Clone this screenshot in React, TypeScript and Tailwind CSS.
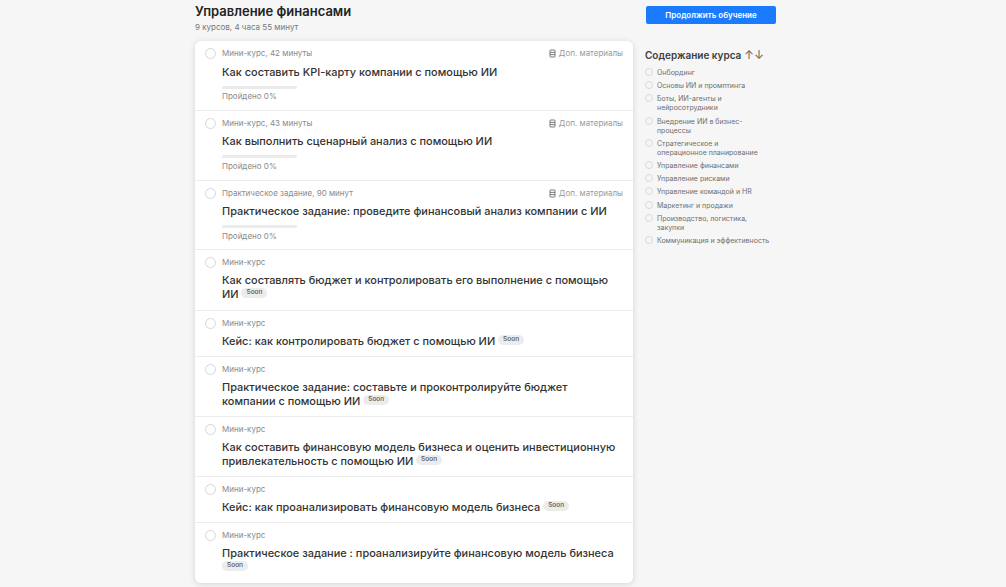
import React from "react";

interface Lesson {
  meta: string;
  title: string;
  progress?: boolean;
  soon?: boolean;
  height: string;
}

const lessons: Lesson[] = [
  { meta: "Мини-курс, 42 минуты", title: "Как составить KPI-карту компании с помощью ИИ", progress: true, height: "h-[70px]" },
  { meta: "Мини-курс, 43 минуты", title: "Как выполнить сценарный анализ с помощью ИИ", progress: true, height: "h-[70px]" },
  { meta: "Практическое задание, 90 минут", title: "Практическое задание: проведите финансовый анализ компании с ИИ", progress: true, height: "h-[69px]" },
  { meta: "Мини-курс", title: "Как составлять бюджет и контролировать его выполнение с помощью ИИ", soon: true, height: "h-[61px]" },
  { meta: "Мини-курс", title: "Кейс: как контролировать бюджет с помощью ИИ", soon: true, height: "h-[46px]" },
  { meta: "Мини-курс", title: "Практическое задание: составьте и проконтролируйте бюджет компании с помощью ИИ", soon: true, height: "h-[60px]" },
  { meta: "Мини-курс", title: "Как составить финансовую модель бизнеса и оценить инвестиционную привлекательность с помощью ИИ", soon: true, height: "h-[60px]" },
  { meta: "Мини-курс", title: "Кейс: как проанализировать финансовую модель бизнеса", soon: true, height: "h-[46px]" },
  { meta: "Мини-курс", title: "Практическое задание : проанализируйте финансовую модель бизнеса", soon: true, height: "h-[60px]" },
];

const contents = [
  "Онбординг",
  "Основы ИИ и промптинга",
  "Боты, ИИ-агенты и нейросотрудники",
  "Внедрение ИИ в бизнес-процессы",
  "Стратегическое и\nоперационное планирование",
  "Управление финансами",
  "Управление рисками",
  "Управление командой и HR",
  "Маркетинг и продажи",
  "Производство, логистика, закупки",
  "Коммуникация и эффективность",
];

const BookIcon = () => (
  <svg width="7" height="9" viewBox="0 0 7 9" fill="none" stroke="#6b6b6b" strokeWidth="0.9">
    <rect x="1" y="1" width="5" height="7" rx="0.5" />
    <path d="M1 3.4h5M1 5.6h5" />
  </svg>
);

const LessonRow = ({ lesson, first }: { lesson: Lesson; first: boolean }) => (
  <div className={`flex border-b border-[#ececec] last:border-b-0 px-[10px] pt-[7px] ${lesson.height}`}>
    <div className="w-[11px] h-[11px] rounded-full border border-[#d4d6de] bg-white shrink-0" />
    <div className="ml-[6px] flex-1 min-w-0">
      <div className="flex items-center justify-between h-[11px] text-[8px] leading-[11px] text-[#8a8a8a]">
        <span>{lesson.meta}</span>
        {lesson.progress && (
          <span className="flex items-center gap-[3px]">
            <BookIcon />
            <span className="text-[#9a9a9a]">Доп. материалы</span>
          </span>
        )}
      </div>
      <div className={`${first ? "mt-[6px]" : "mt-[5px]"} text-[10.95px] leading-[14px] font-medium text-[#333]`}>
        {lesson.title}{" "}
        {lesson.soon && (
          <span className="inline-block align-[4px] px-[5px] h-[10px] rounded-full bg-[#ececec] text-[6.5px] leading-[8px] font-medium text-[#555]">
            Soon
          </span>
        )}
      </div>
      {lesson.progress && (
        <>
          <div className="mt-[7px] w-[75px] h-[3px] rounded-full bg-[#ebebeb]" />
          <div className={`${first ? "mt-[2px]" : "mt-[3px]"} text-[8px] leading-[11px] text-[#8a8a8a]`}>Пройдено 0%</div>
        </>
      )}
    </div>
  </div>
);

export default function App() {
  return (
    <div className="h-[587px] overflow-hidden bg-[#f6f6f6] font-['Inter',sans-serif]">
      <div className="flex w-[581px] ml-[195px]">
        <div className="w-[438px] shrink-0">
          <h1 className="mt-[3px] text-[13px] leading-[17px] font-semibold text-[#222]">Управление финансами</h1>
          <p className="mt-[2px] text-[8px] leading-[11px] text-[#777]">9 курсов, 4 часа 55 минут</p>
          <div className="mt-[8px] rounded-[6px] bg-white shadow-[0_1px_6px_rgba(0,0,0,0.14)]">
            {lessons.map((lesson, i) => (
              <LessonRow key={lesson.title} lesson={lesson} first={i === 0} />
            ))}
          </div>
        </div>
        <aside className="ml-[12px] w-[131px] shrink-0">
          <button className="mt-[3px] ml-[1px] w-[130px] h-[18px] rounded-[2px] bg-[#1a7bff] text-[8px] font-semibold text-white">
            Продолжить обучение
          </button>
          <h2 className="mt-[24px] text-[10px] leading-[14px] font-semibold text-[#3d3d3d]">
            Содержание курса <span className="text-[12px] font-normal text-[#666]">↑↓</span>
          </h2>
          <ul className="mt-[6px]">
            {contents.map((item) => (
              <li key={item} className="flex items-start gap-[4px] mb-[4.2px]">
                <span className="w-[8px] h-[8px] rounded-full border border-[#d8dae0] shrink-0" />
                <span className="whitespace-pre-line text-[7px] leading-[9px] text-[#6f6f6f]">{item}</span>
              </li>
            ))}
          </ul>
        </aside>
      </div>
    </div>
  );
}
